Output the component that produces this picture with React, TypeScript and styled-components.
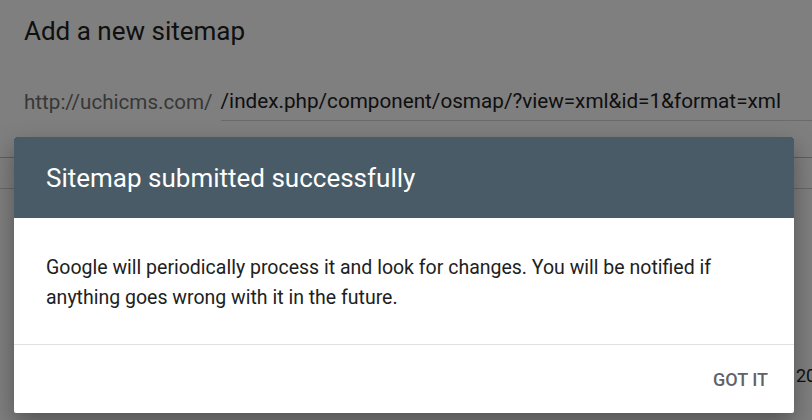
import styled, { createGlobalStyle } from "styled-components";

const GlobalStyle = createGlobalStyle`
    html, body {
        margin: 0;
        padding: 0;
        overflow: hidden;
        background: #ffffff;
        font-family: Roboto, "Liberation Sans", Arial, sans-serif;
    }
`

const Page = styled.div`
    position: relative;
    width: 812px;
    height: 420px;
    overflow: hidden;
    background: #ffffff;
`

const Card = styled.section`
    display: flex;
    flex-direction: column;
    padding: 15px 0 0 24px;
`

const CardTitle = styled.h1`
    margin: 0;
    font-size: 26px;
    font-weight: 400;
    line-height: 32px;
    color: #202020;
`

const UrlRow = styled.div`
    display: flex;
    align-items: flex-end;
    gap: 8px;
    margin-top: 40px;
`

const UrlPrefix = styled.span`
    font-size: 20.6px;
    line-height: 28px;
    color: #6f6f6f;
    padding-bottom: 5px;
`

const UrlInput = styled.div`
    flex: 1;
    font-size: 20.7px;
    line-height: 28px;
    color: #202020;
    padding-bottom: 5px;
    border-bottom: 1px solid #d6d6d6;
    white-space: nowrap;
`

const TableHead = styled.div`
    margin-top: 36px;
    height: 30px;
    border-top: 1px solid #bdbdbd;
    border-bottom: 1px solid #cfcfcf;
`

const TableRow = styled.div`
    padding: 176px 0 0 796px;
    font-size: 18px;
    color: #202020;
    white-space: nowrap;
`

const Overlay = styled.div`
    position: absolute;
    inset: 0;
    background: rgba(0, 0, 0, 0.5);
    padding: 137px 18px 0 14px;
`

const Dialog = styled.div`
    display: flex;
    flex-direction: column;
    width: 780px;
    background: #ffffff;
    border-radius: 2px;
    box-shadow: 0 10px 24px rgba(0, 0, 0, 0.35);
    overflow: hidden;
`

const DialogHeader = styled.header`
    display: flex;
    align-items: center;
    height: 81px;
    padding: 0 32px;
    background: #485b67;
`

const DialogTitle = styled.h2`
    margin: 0;
    font-size: 26px;
    font-weight: 400;
    color: #ffffff;
`

const DialogBody = styled.p`
    margin: 0;
    padding: 35px 32px 31px;
    font-size: 19.5px;
    line-height: 30px;
    color: #212121;
    border-bottom: 1px solid #e0e0e0;
`

const DialogFooter = styled.footer`
    display: flex;
    justify-content: flex-end;
    align-items: center;
    height: 68px;
    padding: 0 18px;
`

const TextButton = styled.button`
    border: none;
    background: none;
    padding: 8px;
    font-family: inherit;
    font-size: 18px;
    font-weight: 500;
    color: #5f6368;
    text-transform: uppercase;
    cursor: pointer;
`

export default function App() {
    return (
        <Page>
            <GlobalStyle />
            <Card>
                <CardTitle>Add a new sitemap</CardTitle>
                <UrlRow>
                    <UrlPrefix>http://uchicms.com/</UrlPrefix>
                    <UrlInput>/index.php/component/osmap/?view=xml&amp;id=1&amp;format=xml</UrlInput>
                </UrlRow>
            </Card>
            <TableHead />
            <TableRow>2020</TableRow>
            <Overlay>
                <Dialog>
                    <DialogHeader>
                        <DialogTitle>Sitemap submitted successfully</DialogTitle>
                    </DialogHeader>
                    <DialogBody>
                        Google will periodically process it and look for changes. You will be notified if anything goes wrong with it in the future.
                    </DialogBody>
                    <DialogFooter>
                        <TextButton>Got it</TextButton>
                    </DialogFooter>
                </Dialog>
            </Overlay>
        </Page>
    );
}
